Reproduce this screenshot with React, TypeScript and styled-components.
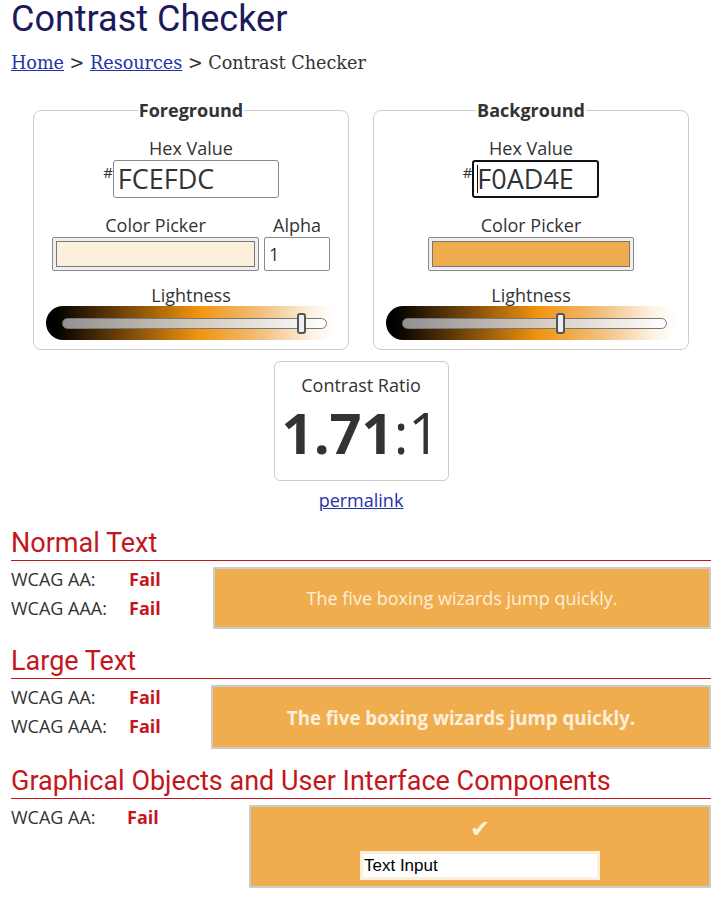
import React from "react"
import styled, { createGlobalStyle } from "styled-components"

const GlobalStyle = createGlobalStyle`
  body {
    margin: 0;
    background: #ffffff;
    font-family: 'Open Sans', sans-serif;
    font-size: 18px;
    color: #333333;
  }
`

const ORANGE = '#F0AD4E'
const CREAM = '#FCEFDC'
const RED = '#c4161c'

const Page = styled.main`
  width: 700px;
  padding: 0 0 0 11px;
  box-sizing: content-box;
`

const Title = styled.h1`
  font-family: 'Roboto', sans-serif;
  font-weight: 400;
  font-size: 36px;
  line-height: 38px;
  color: #1b1a5c;
  margin: 0;
`

const Crumbs = styled.nav`
  font-family: 'DejaVu Serif', serif;
  font-size: 17.6px;
  line-height: 22px;
  color: #333;
  margin-top: 14px;

  a {
    color: #2233aa;
    text-decoration: underline;
  }
`

const Pickers = styled.div`
  display: flex;
  justify-content: center;
  gap: 24px;
  margin-top: 26px;
`

const Panel = styled.fieldset`
  width: 316px;
  height: 250px;
  box-sizing: border-box;
  border: 1px solid #cccccc;
  border-radius: 8px;
  margin: 0;
  padding: 0 10px;
  display: flex;
  flex-direction: column;
  align-items: center;
`

const Legend = styled.legend`
  font-weight: 700;
  font-size: 18px;
  line-height: 20px;
  color: #333;
  padding: 0 1px;
  margin: 0 auto;
`

const Label = styled.div`
  font-size: 18px;
  line-height: 20px;
  color: #333;
  text-align: center;
`

const HexLabel = styled(Label)`
  margin-top: 18px;
`

const HexRow = styled.div`
  display: flex;
  align-items: flex-start;
  margin-top: 2px;
`

const Hash = styled.span`
  font-size: 15px;
  line-height: 15px;
  margin-top: 5px;
  color: #333;
`

const HexInput = styled.div<{ $w: number; $focus?: boolean }>`
  width: ${(p) => p.$w}px;
  height: 38px;
  box-sizing: border-box;
  border: ${(p) => p.$focus ? '2px solid #111' : '1px solid #8a8a8a'};
  border-radius: 3px;
  font-size: 27px;
  line-height: ${(p) => p.$focus ? '34px' : '36px'};
  padding-left: ${(p) => p.$focus ? '3px' : '4px'};
  color: #333;
  position: relative;
`

const Caret = styled.span`
  position: absolute;
  left: 3px;
  top: 3px;
  width: 1px;
  height: 28px;
  background: #111;
`

const PickRow = styled.div`
  display: flex;
  gap: 5px;
  margin-top: 17px;
`

const PickCol = styled.div`
  display: flex;
  flex-direction: column;
  align-items: center;
  gap: 2px;
`

const Swatch = styled.div<{ $color: string; $w: number }>`
  width: ${(p) => p.$w}px;
  height: 34px;
  box-sizing: border-box;
  background: #efefef;
  border: 1px solid #8a8a8a;
  border-radius: 2px;
  padding: 3px 3px;

  &::after {
    content: '';
    display: block;
    height: 100%;
    box-sizing: border-box;
    border: 1px solid #777;
    background: ${(p) => p.$color};
  }
`

const AlphaInput = styled.div`
  width: 66px;
  height: 34px;
  box-sizing: border-box;
  border: 1px solid #8a8a8a;
  border-radius: 2px;
  font-size: 18px;
  line-height: 32px;
  padding-left: 4px;
  color: #333;
`

const SliderBlock = styled.div`
  display: flex;
  flex-direction: column;
  align-items: center;
  margin-top: 14px;
  gap: 1px;
`

const SliderPill = styled.div`
  width: 291px;
  height: 34px;
  border-radius: 17px;
  background: linear-gradient(to right, #000 0%, #000 3%, #6b3f08 25%, #f0930e 52%, #f2c283 75%, #fdf3e6 92%, #fff 100%);
  display: flex;
  align-items: center;
  padding: 0 10px 0 16px;
  box-sizing: border-box;
`

const Track = styled.div`
  position: relative;
  flex: 1;
  height: 11px;
  box-sizing: border-box;
  border: 1px solid #777;
  border-radius: 6px;
  background: linear-gradient(to right, rgba(160,160,160,0.9), rgba(255,255,255,0.9));
`

const Thumb = styled.div`
  position: absolute;
  top: -6px;
  width: 9px;
  height: 21px;
  box-sizing: border-box;
  background: #eeeeee;
  border: 2px solid #555;
  border-radius: 3px;
`

const RatioBox = styled.section`
  width: 175px;
  height: 120px;
  box-sizing: border-box;
  margin: 11px auto 0;
  border: 1px solid #cccccc;
  border-radius: 6px;
  display: flex;
  flex-direction: column;
  align-items: center;
  padding-top: 13px;
`

const Ratio = styled.div`
  display: flex;
  font-size: 56px;
  line-height: 64px;
  margin-top: 5px;
  color: #333;
`

const RatioValue = styled.b`
  font-weight: 700;
`

const Permalink = styled.a`
  display: block;
  width: max-content;
  margin: 8px auto 0;
  font-size: 18px;
  line-height: 22px;
  color: #2233aa;
  text-decoration: underline;
`

const Section = styled.section`
  margin-top: 16px;

  &:first-of-type {
    margin-top: 17px;
  }
`

const SectionTitle = styled.h2`
  font-family: 'Roboto', sans-serif;
  font-weight: 400;
  font-size: 27px;
  line-height: 32px;
  color: ${RED};
  margin: 0;
  padding-bottom: 1px;
  border-bottom: 1px solid ${RED};
`

const SectionBody = styled.div`
  display: flex;
  align-items: flex-start;
`

const Results = styled.div<{ $w: number }>`
  width: ${(p) => p.$w}px;
  margin-top: 4px;
`

const ResultRow = styled.div`
  display: flex;
  font-size: 18px;
  line-height: 29px;
  color: #333;
`

const RowLabel = styled.span<{ $w: number }>`
  width: ${(p) => p.$w}px;
`

const Fail = styled.strong`
  color: ${RED};
  font-weight: 700;
`

const Sample = styled.div<{ $h: number; $bold?: boolean }>`
  flex: 1;
  height: ${(p) => p.$h}px;
  margin-top: 6px;
  box-sizing: border-box;
  background: ${ORANGE};
  border: 2px solid #cccccc;
  color: ${CREAM};
  display: flex;
  flex-direction: column;
  align-items: center;
  justify-content: center;
  font-size: ${(p) => p.$bold ? '18.7px' : '18px'};
  font-weight: ${(p) => p.$bold ? 700 : 400};
`

const Check = styled.span`
  font-family: 'DejaVu Sans', sans-serif;
  font-size: 24px;
  line-height: 26px;
  color: ${CREAM};
  margin: 3px 0 9px;
`

const DemoInput = styled.div`
  width: 240px;
  height: 29px;
  box-sizing: border-box;
  background: #fff;
  border: 3px solid ${CREAM};
  font-family: 'Liberation Sans', Arial, sans-serif;
  font-size: 17px;
  line-height: 23px;
  padding-left: 1px;
  color: #000;
`

type PanelProps = {
  legend: string
  hex: string
  hexWidth: number
  focus?: boolean
  color: string
  swatchWidth: number
  alpha?: boolean
  thumb: number
}

function ColorPanel(p: PanelProps) {
  return (
    <Panel>
      <Legend>{p.legend}</Legend>
      <HexLabel>Hex Value</HexLabel>
      <HexRow>
        <Hash>#</Hash>
        <HexInput $w={p.hexWidth} $focus={p.focus}>
          {p.focus && <Caret />}
          {p.hex}
        </HexInput>
      </HexRow>
      <PickRow>
        <PickCol>
          <Label>Color Picker</Label>
          <Swatch $color={p.color} $w={p.swatchWidth} />
        </PickCol>
        {p.alpha && (
          <PickCol>
            <Label>Alpha</Label>
            <AlphaInput>1</AlphaInput>
          </PickCol>
        )}
      </PickRow>
      <SliderBlock>
        <Label>Lightness</Label>
        <SliderPill>
          <Track>
            <Thumb style={{ left: `${p.thumb}%` }} />
          </Track>
        </SliderPill>
      </SliderBlock>
    </Panel>
  )
}

type Res = { label: string; result: string }

function ResultList({ rows, w, labelW }: { rows: Res[]; w: number; labelW: number }) {
  return (
    <Results $w={w}>
      {rows.map((r) => (
        <ResultRow key={r.label}>
          <RowLabel $w={labelW}>{r.label}</RowLabel>
          <Fail>{r.result}</Fail>
        </ResultRow>
      ))}
    </Results>
  )
}

export default function App() {
  const both: Res[] = [
    { label: 'WCAG AA:', result: 'Fail' },
    { label: 'WCAG AAA:', result: 'Fail' },
  ]
  return (
    <Page>
      <GlobalStyle />
      <Title>Contrast Checker</Title>
      <Crumbs>
        <a href="#">Home</a> &gt; <a href="#">Resources</a> &gt; Contrast Checker
      </Crumbs>

      <Pickers>
        <ColorPanel legend="Foreground" hex="FCEFDC" hexWidth={166} color={CREAM} swatchWidth={207} alpha thumb={89} />
        <ColorPanel legend="Background" hex="F0AD4E" hexWidth={127} focus color={ORANGE} swatchWidth={206} thumb={58.5} />
      </Pickers>

      <RatioBox>
        <Label>Contrast Ratio</Label>
        <Ratio><RatioValue>1.71</RatioValue><span>:1</span></Ratio>
      </RatioBox>
      <Permalink href="#">permalink</Permalink>

      <Section>
        <SectionTitle>Normal Text</SectionTitle>
        <SectionBody>
          <ResultList rows={both} w={202} labelW={118} />
          <Sample $h={62}>The five boxing wizards jump quickly.</Sample>
        </SectionBody>
      </Section>

      <Section>
        <SectionTitle>Large Text</SectionTitle>
        <SectionBody>
          <ResultList rows={both} w={200} labelW={118} />
          <Sample $h={64} $bold>The five boxing wizards jump quickly.</Sample>
        </SectionBody>
      </Section>

      <Section>
        <SectionTitle>Graphical Objects and User Interface Components</SectionTitle>
        <SectionBody>
          <ResultList rows={[{ label: 'WCAG AA:', result: 'Fail' }]} w={238} labelW={116} />
          <Sample $h={83}>
            <Check>✔</Check>
            <DemoInput>Text Input</DemoInput>
          </Sample>
        </SectionBody>
      </Section>
    </Page>
  )
}
